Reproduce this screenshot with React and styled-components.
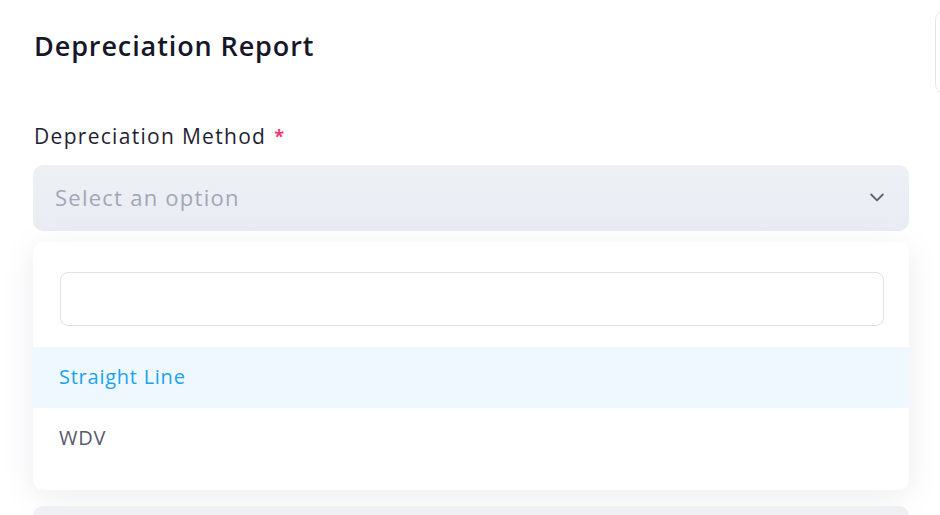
import React from 'react';
import styled, { createGlobalStyle } from 'styled-components';

const GlobalStyle = createGlobalStyle`
  html, body {
    margin: 0;
    padding: 0;
    background: #ffffff;
    overflow: hidden;
  }
  body {
    font-family: "Open Sans", "Noto Sans", Arial, sans-serif;
  }
`;

const Page = styled.div`
  display: flex;
  align-items: flex-start;
  gap: 26px;
  padding-left: 33px;
  width: 1300px;
`;

const Main = styled.div`
  width: 876px;
  flex-shrink: 0;
  display: flex;
  flex-direction: column;
`;

const SideCard = styled.div`
  width: 300px;
  height: 82px;
  margin-top: 10px;
  border: 1px solid #e4e4ef;
  border-radius: 10px;
  flex-shrink: 0;
`;

const Title = styled.h1`
  margin: 28px 0 0 1px;
  font-size: 27px;
  line-height: 36px;
  font-weight: 600;
  color: #161629;
  letter-spacing: 0.9px;
`;

const Label = styled.label`
  margin-top: 58px;
  font-size: 21px;
  line-height: 28px;
  font-weight: 500;
  color: #1f1f33;
  letter-spacing: 1.3px;
  display: flex;
  gap: 8px;
  padding-left: 1px;
`;

const Required = styled.span`
  color: #f0386b;
  font-size: 18px;
  font-weight: 700;
`;

const SelectBox = styled.div`
  margin-top: 15px;
  height: 66px;
  border-radius: 10px;
  background: linear-gradient(180deg, #edf0f5 0%, #e9ecf2 100%);
  display: flex;
  align-items: center;
  justify-content: space-between;
  padding: 0 22px 2px;
  box-sizing: border-box;
`;

const Placeholder = styled.span`
  font-size: 22px;
  color: #a3a6b8;
  font-weight: 500;
  letter-spacing: 1.25px;
`;

const Menu = styled.div`
  margin-top: 11px;
  height: 248px;
  border-radius: 10px;
  background: #ffffff;
  box-shadow: 0 6px 34px rgba(30, 30, 70, 0.08);
  padding-top: 30px;
  box-sizing: border-box;
  display: flex;
  flex-direction: column;
`;

const Search = styled.input`
  margin: 0 25px 21px 27px;
  height: 54px;
  border: 1.5px solid #dfdfea;
  border-radius: 8px;
  outline: none;
  box-sizing: border-box;
  font-family: inherit;
  font-size: 18px;
`;

const Option = styled.div`
  height: 61px;
  display: flex;
  align-items: center;
  padding-left: 26px;
  padding-bottom: 2px;
  box-sizing: border-box;
  font-size: 20px;
  letter-spacing: 0.75px;
  background: ${(p) => (p.active ? '#eff8ff' : '#ffffff')};
  color: ${(p) => (p.active ? '#1aa3ef' : '#585a6d')};
`;

const NextField = styled.div`
  margin-top: 16px;
  height: 66px;
  border-radius: 10px;
  background: #eef0f4;
`;

const Chevron = () => (
  <svg width="20" height="20" viewBox="0 0 24 24" fill="none" stroke="#5d5f73" strokeWidth="2.2" strokeLinecap="round" strokeLinejoin="round">
    <path d="M5 9l7 7 7-7" />
  </svg>
);

const App = () => {
  return (
    <>
      <GlobalStyle />
      <Page>
        <Main>
          <Title>Depreciation Report</Title>
          <Label>
            Depreciation Method <Required>*</Required>
          </Label>
          <SelectBox>
            <Placeholder>Select an option</Placeholder>
            <Chevron />
          </SelectBox>
          <Menu>
            <Search type="text" />
            <Option active>Straight Line</Option>
            <Option>WDV</Option>
          </Menu>
          <NextField />
        </Main>
        <SideCard />
      </Page>
    </>
  );
};

export default App;
